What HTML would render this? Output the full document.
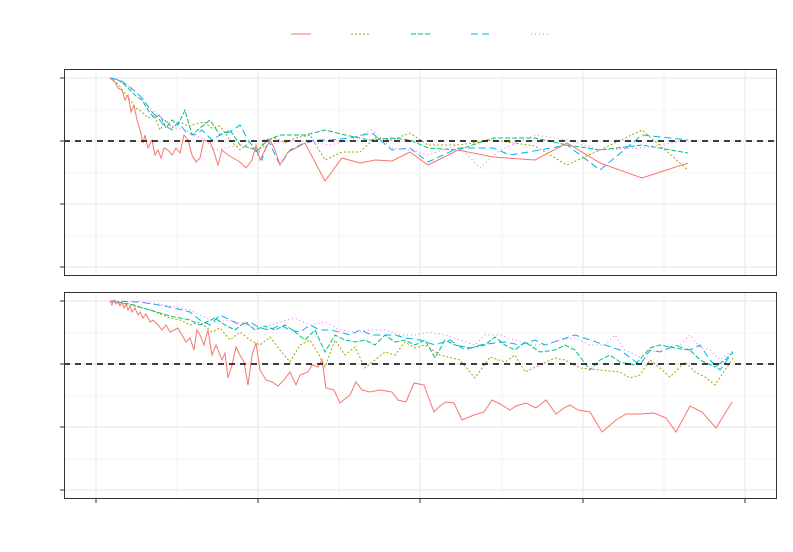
<!DOCTYPE html>
<html><head><style>html,body{margin:0;padding:0;background:#fff;width:793px;height:552px;overflow:hidden}</style></head>
<body>
<svg width="793" height="552" viewBox="0 0 793 552" xmlns="http://www.w3.org/2000/svg">
<g stroke-width="1.1" fill="none">
<line x1="291" y1="34" x2="311" y2="34" stroke="#F8766D"/>
<line x1="351" y1="34" x2="371" y2="34" stroke="#A3A500" stroke-dasharray="2,2"/>
<line x1="411" y1="34" x2="431" y2="34" stroke="#00BF7D" stroke-dasharray="5,2"/>
<line x1="471" y1="34" x2="491" y2="34" stroke="#00B0F6" stroke-dasharray="7,4"/>
<line x1="531" y1="34" x2="551" y2="34" stroke="#E76BF3" stroke-dasharray="1,3"/>
</g>
<!-- panel 1 -->
<g stroke="#ebebeb">
<g stroke-width="0.6"><line x1="64" y1="110" x2="777" y2="110"/><line x1="64" y1="173" x2="777" y2="173"/><line x1="64" y1="236" x2="777" y2="236"/>
<line x1="177" y1="69" x2="177" y2="276"/><line x1="339" y1="69" x2="339" y2="276"/><line x1="502" y1="69" x2="502" y2="276"/><line x1="664" y1="69" x2="664" y2="276"/></g>
<g stroke-width="1.2"><line x1="64" y1="78" x2="777" y2="78"/><line x1="64" y1="141" x2="777" y2="141"/><line x1="64" y1="204" x2="777" y2="204"/><line x1="64" y1="267" x2="777" y2="267"/>
<line x1="96" y1="69" x2="96" y2="276"/><line x1="258" y1="69" x2="258" y2="276"/><line x1="420" y1="69" x2="420" y2="276"/><line x1="583" y1="69" x2="583" y2="276"/><line x1="745" y1="69" x2="745" y2="276"/></g>
</g>
<g fill="none" stroke-width="1">
<polyline stroke="#A3A500" stroke-dasharray="2,2" points="110,78 118,84 124,92 130,100 136,108 142,112 148,118 154,115 160,130 166,120 172,128 180,122 188,126 196,124 204,122 212,128 220,126 230,140 240,150 250,142 258,155 264,140 275,138 285,143 295,138 310,135 325,160 342,152 360,152 375,138 392,140 410,133 428,145 458,145 493,140 535,146 567,165 600,150 642,130 688,170"/>
<polyline stroke="#00BF7D" stroke-dasharray="5,2" points="110,78 118,80 124,84 130,90 136,96 142,100 148,110 154,118 160,115 166,128 172,120 178,125 185,110 192,135 200,128 210,120 220,135 230,130 240,145 250,148 258,150 268,140 280,135 292,135 305,135 325,130 345,135 370,140 392,138 410,140 428,148 458,150 493,138 535,138 567,145 600,150 642,145 688,153"/>
<polyline stroke="#00B0F6" stroke-dasharray="7,4" points="110,78 120,80 128,86 136,92 144,100 150,110 158,118 164,125 172,130 178,122 186,132 194,135 202,130 212,140 220,135 230,132 240,125 248,140 256,150 262,160 268,140 280,165 290,150 300,145 315,140 330,140 350,138 372,133 392,150 410,148 428,162 458,148 493,148 510,155 540,150 567,145 600,170 642,135 688,140"/>
<polyline stroke="#E76BF3" stroke-dasharray="1,3" points="110,78 122,82 132,88 140,96 150,108 158,115 166,122 175,128 185,130 195,135 205,140 215,150 225,148 240,145 255,150 268,145 290,140 310,142 330,145 350,140 372,130 392,148 410,150 428,155 458,145 480,168 500,150 535,135 567,140 600,150 642,148 688,140"/>
<polyline stroke="#F8766D" points="110,78 115,82 118,88 122,90 125,100 128,95 131,112 134,105 137,120 140,130 143,143 145,135 148,148 152,140 155,155 158,150 161,158 164,148 168,150 172,155 176,148 180,153 184,135 188,140 192,155 196,162 200,158 204,140 210,142 214,152 218,165 222,150 228,155 240,162 246,168 252,160 256,145 260,160 265,150 270,140 275,150 280,165 288,152 296,148 305,143 325,181 342,158 360,163 375,160 392,161 410,152 428,165 458,150 493,157 535,160 567,143 600,163 642,178 688,163"/>
</g>
<line x1="64" y1="141" x2="777" y2="141" stroke="#000" stroke-width="1.5" stroke-dasharray="6,5"/>
<rect x="64.5" y="69.5" width="712" height="206" fill="none" stroke="#333" stroke-width="1"/>
<g stroke="#333"><line x1="60" y1="78" x2="64" y2="78"/><line x1="60" y1="141" x2="64" y2="141"/><line x1="60" y1="204" x2="64" y2="204"/><line x1="60" y1="267" x2="64" y2="267"/></g>
<!-- panel 2 -->
<g stroke="#ebebeb">
<g stroke-width="0.6"><line x1="64" y1="333" x2="777" y2="333"/><line x1="64" y1="396" x2="777" y2="396"/><line x1="64" y1="459" x2="777" y2="459"/>
<line x1="177" y1="292" x2="177" y2="499"/><line x1="339" y1="292" x2="339" y2="499"/><line x1="502" y1="292" x2="502" y2="499"/><line x1="664" y1="292" x2="664" y2="499"/></g>
<g stroke-width="1.2"><line x1="64" y1="301" x2="777" y2="301"/><line x1="64" y1="364" x2="777" y2="364"/><line x1="64" y1="427" x2="777" y2="427"/><line x1="64" y1="490" x2="777" y2="490"/>
<line x1="96" y1="292" x2="96" y2="499"/><line x1="258" y1="292" x2="258" y2="499"/><line x1="420" y1="292" x2="420" y2="499"/><line x1="583" y1="292" x2="583" y2="499"/><line x1="745" y1="292" x2="745" y2="499"/></g>
</g>
<g fill="none" stroke-width="1">
<polyline stroke="#A3A500" stroke-dasharray="2,2" points="110,301 130,305 150,310 170,318 180,320 190,325 200,322 212,332 220,328 230,340 240,332 250,340 260,345 270,337 280,350 290,362 300,345 310,340 318,353 325,367 335,340 345,355 355,347 365,368 375,360 385,352 395,355 405,342 415,348 425,345 440,355 460,360 475,378 490,357 505,362 515,355 525,372 540,365 555,358 565,360 580,368 600,370 620,372 630,378 640,375 650,360 660,368 670,377 685,362 695,372 705,377 715,385 725,370 733,358"/>
<polyline stroke="#00BF7D" stroke-dasharray="5,2" points="110,301 130,304 150,310 170,316 180,318 190,320 200,325 215,318 225,325 235,330 245,322 255,330 265,326 275,330 285,325 295,332 305,340 315,330 325,352 335,335 345,340 355,342 365,340 375,345 385,335 395,342 405,340 415,345 425,340 435,358 445,340 455,345 470,348 485,345 495,337 505,345 515,350 525,342 540,352 555,350 565,345 575,350 590,370 600,360 610,355 620,362 635,365 650,348 660,345 675,348 690,350 700,360 715,367 725,360 733,352"/>
<polyline stroke="#00B0F6" stroke-dasharray="7,4" points="110,301 140,302 165,306 190,312 200,320 210,325 220,315 230,320 240,325 250,322 260,328 270,330 280,325 290,330 300,332 310,325 320,330 330,330 340,332 350,335 360,330 372,335 385,335 395,335 405,338 420,340 435,345 450,340 465,350 480,345 495,343 505,342 520,345 535,340 545,345 560,340 575,335 590,340 605,345 620,350 640,365 650,350 660,352 675,345 690,350 700,345 710,360 720,370 733,352"/>
<polyline stroke="#E76BF3" stroke-dasharray="1,3" points="110,301 140,302 165,305 190,310 200,315 215,322 230,320 245,325 260,328 280,322 295,318 310,325 325,322 340,330 355,332 370,330 385,330 400,335 415,335 430,332 445,335 460,340 475,345 485,335 500,335 515,340 530,345 545,345 560,340 575,338 590,345 605,345 615,335 625,350 640,357 650,352 665,350 680,345 690,335 700,348 710,350 720,360 733,350"/>
<polyline stroke="#F8766D" points="110,301 112,305 114,300 116,304 118,302 120,306 122,302 124,308 126,304 128,310 130,306 132,312 135,308 138,315 140,312 143,318 146,314 150,322 153,320 158,325 162,330 166,325 170,332 174,330 178,328 182,335 186,342 190,338 194,350 197,330 200,335 204,345 208,330 212,355 216,345 222,360 225,353 228,378 232,365 236,347 240,355 244,362 248,385 252,355 256,343 260,370 266,380 272,382 278,386 284,380 290,372 296,385 300,375 308,372 312,365 318,367 322,360 326,388 334,390 340,403 346,398 350,395 356,382 362,390 370,392 380,390 392,392 398,400 406,402 414,383 424,385 434,412 440,406 446,402 454,403 462,420 474,415 484,412 492,400 500,404 510,410 516,406 526,403 536,408 546,400 556,414 564,408 570,405 578,410 590,412 602,432 616,420 626,414 640,414 654,413 666,418 676,432 690,406 702,412 716,428 732,402"/>
</g>
<line x1="64" y1="364" x2="777" y2="364" stroke="#000" stroke-width="1.5" stroke-dasharray="6,5"/>
<rect x="64.5" y="292.5" width="712" height="206" fill="none" stroke="#333" stroke-width="1"/>
<g stroke="#333"><line x1="60" y1="301" x2="64" y2="301"/><line x1="60" y1="364" x2="64" y2="364"/><line x1="60" y1="427" x2="64" y2="427"/><line x1="60" y1="490" x2="64" y2="490"/>
<line x1="96" y1="499" x2="96" y2="503"/><line x1="258" y1="499" x2="258" y2="503"/><line x1="420" y1="499" x2="420" y2="503"/><line x1="583" y1="499" x2="583" y2="503"/><line x1="745" y1="499" x2="745" y2="503"/></g>
</svg>
</body></html>
